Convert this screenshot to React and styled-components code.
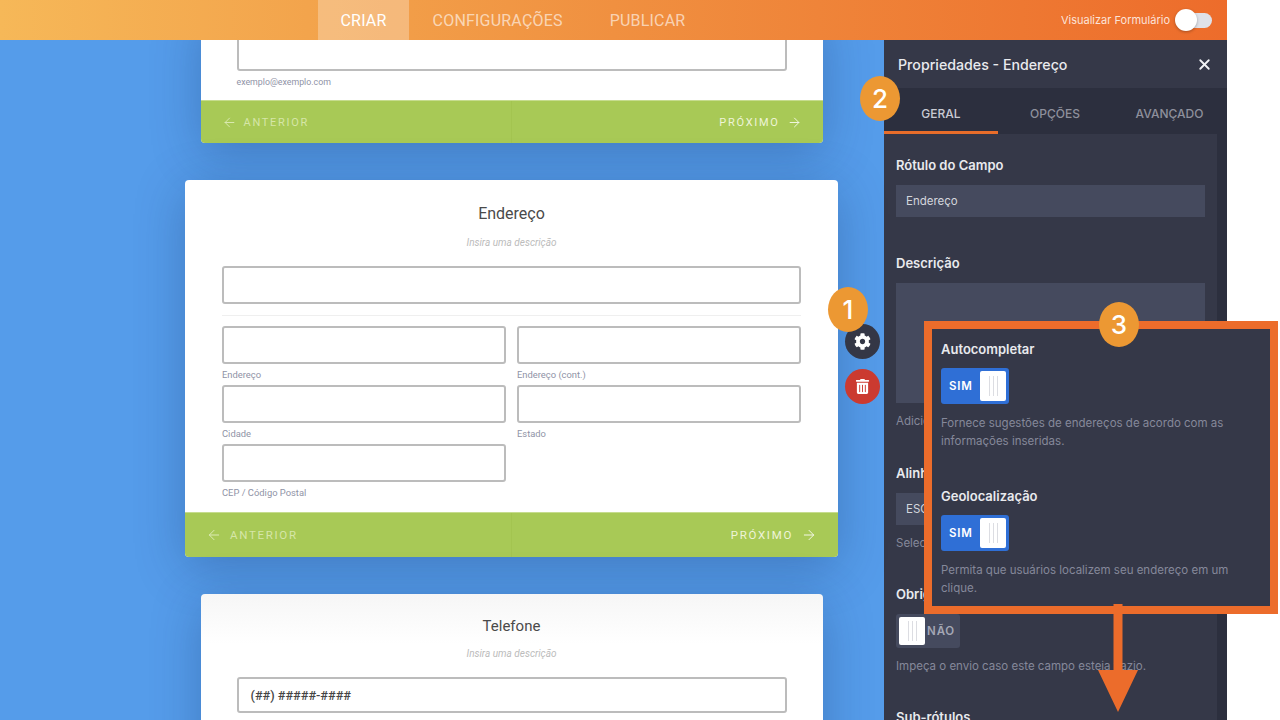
import styled, { createGlobalStyle } from 'styled-components';
import { ArrowLeft, ArrowRight, X } from 'lucide-react';
import { FaCog, FaTrashAlt } from 'react-icons/fa';

const GlobalStyle = createGlobalStyle`
  html, body {
    margin: 0;
    background: #fff;
  }
  * {
    box-sizing: border-box;
  }
`;

const NavButton = ({ direction, wide }) =>
  direction === 'prev' ? (
    <FooterSide $wide={wide}>
      <ArrowLeft size={wide ? 16 : 15} strokeWidth={1.5} />
      <FooterText $wide={wide}>ANTERIOR</FooterText>
    </FooterSide>
  ) : (
    <FooterSide $next $wide={wide}>
      <FooterText $next $wide={wide}>PRÓXIMO</FooterText>
      <ArrowRight size={wide ? 16 : 15} strokeWidth={1.5} />
    </FooterSide>
  );

const CardFooter = ({ wide }) => (
  <Footer $wide={wide}>
    <NavButton direction="prev" wide={wide} />
    <NavButton direction="next" wide={wide} />
  </Footer>
);

const Toggle = ({ on }) => (
  <ToggleBox $on={on}>
    {on && <ToggleText $on>SIM</ToggleText>}
    <Knob>
      <Grip />
      <Grip />
      <Grip />
    </Knob>
    {!on && <ToggleText>NÃO</ToggleText>}
  </ToggleBox>
);

const App = () => {
  return (
    <Page>
      <GlobalStyle />
      <Builder>
        <TopBar>
          <Tabs>
            <TopTab $active>CRIAR</TopTab>
            <TopTab>CONFIGURAÇÕES</TopTab>
            <TopTab>PUBLICAR</TopTab>
          </Tabs>
          <Preview>
            <PreviewLabel>Visualizar Formulário</PreviewLabel>
            <PreviewSwitch>
              <PreviewKnob />
            </PreviewSwitch>
          </Preview>
        </TopBar>
        <Workspace>
          <Canvas>
            <EmailCard>
              <CardBody $scrolled>
                <Input $height={61} />
                <SubLabel $small>exemplo@exemplo.com</SubLabel>
              </CardBody>
              <CardFooter />
            </EmailCard>
            <AddressCard>
              <CardBody $wide>
                <Title>Endereço</Title>
                <Description>Insira uma descrição</Description>
                <Input />
                <Divider />
                <AddressGrid>
                  <Field>
                    <Input />
                    <SubLabel>Endereço</SubLabel>
                  </Field>
                  <Field>
                    <Input />
                    <SubLabel>Endereço (cont.)</SubLabel>
                  </Field>
                  <Field>
                    <Input />
                    <SubLabel>Cidade</SubLabel>
                  </Field>
                  <Field>
                    <Input />
                    <SubLabel>Estado</SubLabel>
                  </Field>
                  <Field>
                    <Input />
                    <SubLabel>CEP / Código Postal</SubLabel>
                  </Field>
                </AddressGrid>
              </CardBody>
              <CardFooter wide />
              <CardTools>
                <Badge $tool>1</Badge>
                <ToolButton>
                  <FaCog size={17} />
                </ToolButton>
                <ToolButton $danger>
                  <FaTrashAlt size={15} />
                </ToolButton>
              </CardTools>
            </AddressCard>
            <PhoneCard>
              <CardBody $phone>
                <Title $phone>Telefone</Title>
                <Description $phone>Insira uma descrição</Description>
                <Input $value>(##) #####-####</Input>
                <SubLabel>Por favor, insira um número de telefone válido.</SubLabel>
              </CardBody>
            </PhoneCard>
          </Canvas>
          <Panel>
            <PanelHeader>
              <PanelTitle>Propriedades - Endereço</PanelTitle>
              <X size={17} strokeWidth={2.6} color="#f1f2f5" />
            </PanelHeader>
            <PanelTabs>
              <PanelTab $active>GERAL</PanelTab>
              <PanelTab>OPÇÕES</PanelTab>
              <PanelTab>AVANÇADO</PanelTab>
              <Badge $tab>2</Badge>
            </PanelTabs>
            <PanelBody>
              <PanelFields>
                <PanelField $gap={37}>
                  <FieldLabel>Rótulo do Campo</FieldLabel>
                  <PanelInput>Endereço</PanelInput>
                </PanelField>
                <PanelField $gap={34}>
                  <FieldLabel>Descrição</FieldLabel>
                  <PanelTextarea />
                  <FieldHint>Adicione uma pequena descrição</FieldHint>
                </PanelField>
                <PanelField $gap={33}>
                  <FieldLabel>Alinhamento do Rótulo</FieldLabel>
                  <PanelInput $caps>ESQUERDA</PanelInput>
                  <FieldHint>Selecione o alinhamento</FieldHint>
                </PanelField>
                <PanelField $gap={33}>
                  <FieldLabel>Obrigatório</FieldLabel>
                  <Toggle on={false} />
                  <FieldHint>Impeça o envio caso este campo esteja vazio.</FieldHint>
                </PanelField>
                <PanelField>
                  <FieldLabel>Sub-rótulos</FieldLabel>
                </PanelField>
              </PanelFields>
            </PanelBody>
          </Panel>
        </Workspace>
      </Builder>
      <Callout>
        <Badge $callout>3</Badge>
        <CalloutField>
          <CalloutLabel>Autocompletar</CalloutLabel>
          <Toggle on />
          <CalloutHint>
            Fornece sugestões de endereços de acordo com as informações inseridas.
          </CalloutHint>
        </CalloutField>
        <CalloutField>
          <CalloutLabel>Geolocalização</CalloutLabel>
          <Toggle on />
          <CalloutHint>
            Permita que usuários localizem seu endereço em um clique.
          </CalloutHint>
        </CalloutField>
      </Callout>
      <DownArrow viewBox="0 0 40 108" aria-hidden="true">
        <path d="M15.5 0h9v66H40L20 108 0 66h15.5z" fill="#ec6c2b" />
      </DownArrow>
    </Page>
  );
};

export default App;

const Page = styled.div`
  position: relative;
  width: 1280px;
  height: 720px;
  overflow: hidden;
  font-family: 'Inter', 'Liberation Sans', sans-serif;
`;

const Builder = styled.div`
  width: 1227px;
  height: 720px;
  display: flex;
  flex-direction: column;
`;

const TopBar = styled.header`
  height: 40px;
  flex: none;
  display: flex;
  justify-content: space-between;
  padding: 0 15px 0 318px;
  background: linear-gradient(90deg, #f6b858 0%, #f09040 50%, #ed6c2b 100%);
  position: relative;
  z-index: 2;
`;

const Tabs = styled.nav`
  display: flex;
`;

const TopTab = styled.div`
  display: flex;
  align-items: center;
  padding: 0 23.5px;
  font-family: 'Roboto', sans-serif;
  font-size: 16px;
  letter-spacing: 0.2px;
  color: ${(p) => (p.$active ? '#fff' : 'rgba(255,255,255,.62)')};
  background: ${(p) => (p.$active ? 'rgba(255,255,255,.28)' : 'transparent')};
  &:first-child {
    padding: 0 22.5px;
  }
`;

const Preview = styled.div`
  display: flex;
  align-items: center;
  gap: 6px;
`;

const PreviewLabel = styled.span`
  font-size: 11px;
  color: rgba(255, 255, 255, 0.82);
`;

const PreviewSwitch = styled.div`
  position: relative;
  width: 36px;
  height: 15px;
  border-radius: 8px;
  background: #dfe1e8;
`;

const PreviewKnob = styled.div`
  position: absolute;
  left: -1px;
  top: -4px;
  width: 22px;
  height: 22px;
  border-radius: 50%;
  background: #fff;
  box-shadow: 0 1px 3px rgba(0, 0, 0, 0.3);
`;

const Workspace = styled.div`
  flex: 1;
  min-height: 0;
  display: flex;
`;

const Canvas = styled.main`
  width: 884px;
  flex: none;
  display: flex;
  flex-direction: column;
  align-items: center;
  gap: 37px;
  padding-left: 139px;
  background: #559cea;
`;

const Card = styled.section`
  position: relative;
  width: 622px;
  flex: none;
  border-radius: 4px;
  background: #fff;
  box-shadow: 0 10px 50px rgba(20, 45, 95, 0.3);
`;

const EmailCard = styled(Card)`
  margin-top: -30px;
`;

const AddressCard = styled(Card)`
  width: 653px;
  height: 377px;
`;

const PhoneCard = styled(Card)`
  height: 200px;
  background: linear-gradient(180deg, #f6f6f6 0, #fff 50px);
`;

const CardBody = styled.div`
  padding: ${(p) => {
    if (p.$scrolled) return '0 36px';
    if (p.$wide) return '24px 37px 0';
    return '23px 36px 0';
  }};
  height: ${(p) => {
    if (p.$scrolled) return '90px';
    if (p.$wide) return '332px';
    return 'auto';
  }};
`;

const Title = styled.h2`
  margin: 0;
  text-align: center;
  font-family: 'Roboto', sans-serif;
  font-size: ${(p) => (p.$phone ? 15 : 16)}px;
  line-height: 19px;
  font-weight: 400;
  color: #4a4a4a;
`;

const Description = styled.p`
  margin: ${(p) => (p.$phone ? '11px 0 17px' : '13px 0 17px')};
  text-align: center;
  font-family: 'Roboto', sans-serif;
  font-size: 10px;
  line-height: 13px;
  font-style: italic;
  color: #bcbcbc;
`;

const Input = styled.div`
  height: ${(p) => (p.$value ? 36 : p.$height || 38)}px;
  border: 2px solid #bcbcbc;
  border-radius: 3px;
  background: #fff;
  display: flex;
  align-items: center;
  padding: 0 12px;
  font-family: 'Roboto', sans-serif;
  font-size: 12.7px;
  font-weight: 500;
  color: #444;
`;

const SubLabel = styled.div`
  margin-top: 5px;
  font-family: 'Roboto', sans-serif;
  font-size: ${(p) => (p.$small ? 8.8 : 9.4)}px;
  line-height: 12px;
  color: #8f93a6;
`;

const Divider = styled.hr`
  margin: 11px 0 10px;
  height: 1px;
  border: 0;
  background: #efefef;
`;

const AddressGrid = styled.div`
  display: grid;
  grid-template-columns: 1fr 1fr;
  column-gap: 11px;
  row-gap: 4px;
`;

const Field = styled.div`
  min-width: 0;
`;

const Footer = styled.footer`
  height: ${(p) => (p.$wide ? 45 : 43)}px;
  display: grid;
  grid-template-columns: 1fr 1fr;
  border-top: 1px solid #c6dc8e;
  border-radius: 0 0 4px 4px;
  background: #a8c956;
`;

const FooterSide = styled.div`
  display: flex;
  align-items: center;
  justify-content: ${(p) => (p.$next ? 'flex-end' : 'flex-start')};
  gap: ${(p) => (p.$wide ? 8 : 7)}px;
  padding: 0 21px;
  color: ${(p) => (p.$next ? '#f3f7e6' : '#dcebb4')};
  ${(p) => !p.$next && 'border-right: 1px solid #a3c450;'}
`;

const FooterText = styled.span`
  font-family: 'Roboto', sans-serif;
  font-size: ${(p) => (p.$wide ? 11.5 : 11)}px;
  letter-spacing: 1.7px;
  color: ${(p) => (p.$next ? '#eef4d8' : '#d6e6a8')};
`;

const CardTools = styled.div`
  position: absolute;
  left: calc(100% + 7px);
  top: 144px;
  display: flex;
  flex-direction: column;
  gap: 10px;
`;

const ToolButton = styled.div`
  width: 35px;
  height: 35px;
  border-radius: 50%;
  display: flex;
  align-items: center;
  justify-content: center;
  color: #fff;
  background: ${(p) => (p.$danger ? '#cb3a30' : '#343746')};
`;

const Badge = styled.div`
  position: absolute;
  width: 40px;
  height: 45px;
  border-radius: 50%;
  display: flex;
  align-items: center;
  justify-content: center;
  font-size: 26px;
  font-weight: 500;
  color: #fff;
  background: #ec9833;
  z-index: 3;
  ${(p) => p.$tool && 'left: -17px; top: -37px;'}
  ${(p) => p.$tab && 'left: -24px; top: -12px;'}
  ${(p) => p.$callout && 'left: 167px; top: -27px;'}
`;

const Panel = styled.aside`
  flex: 1;
  min-width: 0;
  display: flex;
  flex-direction: column;
  background: #2c2f3e;
`;

const PanelHeader = styled.div`
  height: 48px;
  flex: none;
  display: flex;
  align-items: center;
  justify-content: space-between;
  padding: 0 14px;
  background: #353848;
`;

const PanelTitle = styled.h3`
  margin: 0;
  font-size: 14.2px;
  font-weight: 500;
  color: #e9eaee;
`;

const PanelTabs = styled.div`
  position: relative;
  height: 46px;
  flex: none;
  display: grid;
  grid-template-columns: 114px 114px 115px;
`;

const PanelTab = styled.div`
  display: flex;
  align-items: center;
  justify-content: center;
  padding-top: 7px;
  font-size: 12px;
  font-weight: 500;
  color: ${(p) => (p.$active ? '#c9cbd3' : '#8e909c')};
  border-bottom: 3px solid ${(p) => (p.$active ? '#e86d2a' : 'transparent')};
`;

const PanelBody = styled.div`
  flex: 1;
  min-height: 0;
  overflow: hidden;
  padding-right: 10px;
`;

const PanelFields = styled.div`
  background: #353848;
  padding: 22px 12px 0;
  height: 100%;
`;

const PanelField = styled.div`
  margin-bottom: ${(p) => p.$gap || 0}px;
`;

const FieldLabel = styled.div`
  font-size: 13px;
  line-height: 18px;
  font-weight: 600;
  color: #e9eaee;
  margin-bottom: 11px;
`;

const PanelInput = styled.div`
  height: 32px;
  display: flex;
  align-items: center;
  padding: 0 10px;
  background: #454a5e;
  font-size: 11.5px;
  color: #d4d6dd;
`;

const PanelTextarea = styled.div`
  height: 120px;
  background: #454a5e;
`;

const FieldHint = styled.div`
  margin-top: 9px;
  font-size: 11.5px;
  line-height: 18px;
  color: #85889a;
`;

const ToggleBox = styled.div`
  width: ${(p) => (p.$on ? 68 : 64)}px;
  height: ${(p) => (p.$on ? 36 : 34)}px;
  padding: 3px;
  display: flex;
  align-items: stretch;
  justify-content: space-between;
  border-radius: 3px;
  background: ${(p) => (p.$on ? '#2f6fd6' : '#454a5e')};
`;

const ToggleText = styled.span`
  align-self: center;
  padding: ${(p) => (p.$on ? '0 0 0 5px' : '0 2px 0 0')};
  font-size: 11.5px;
  font-weight: 600;
  letter-spacing: 0.8px;
  color: ${(p) => (p.$on ? '#fff' : '#a4a7b5')};
`;

const Knob = styled.div`
  width: 26px;
  display: flex;
  align-items: center;
  justify-content: center;
  gap: 3px;
  border-radius: 2px;
  background: #fff;
`;

const Grip = styled.i`
  width: 1px;
  height: 20px;
  background: #dcdde2;
`;

const Callout = styled.div`
  position: absolute;
  left: 924px;
  top: 321px;
  width: 354px;
  height: 293px;
  padding: 11px 9px 0;
  border: 8px solid #ec6c2b;
  background: #353848;
  z-index: 4;
`;

const CalloutField = styled.div`
  margin-bottom: 37px;
`;

const CalloutLabel = styled(FieldLabel)`
  margin-bottom: 10px;
`;

const CalloutHint = styled.p`
  margin: 10px 0 0;
  font-size: 11.5px;
  line-height: 18px;
  color: #85889a;
`;

const DownArrow = styled.svg`
  position: absolute;
  left: 1098px;
  top: 604px;
  width: 40px;
  height: 108px;
  z-index: 5;
`;
